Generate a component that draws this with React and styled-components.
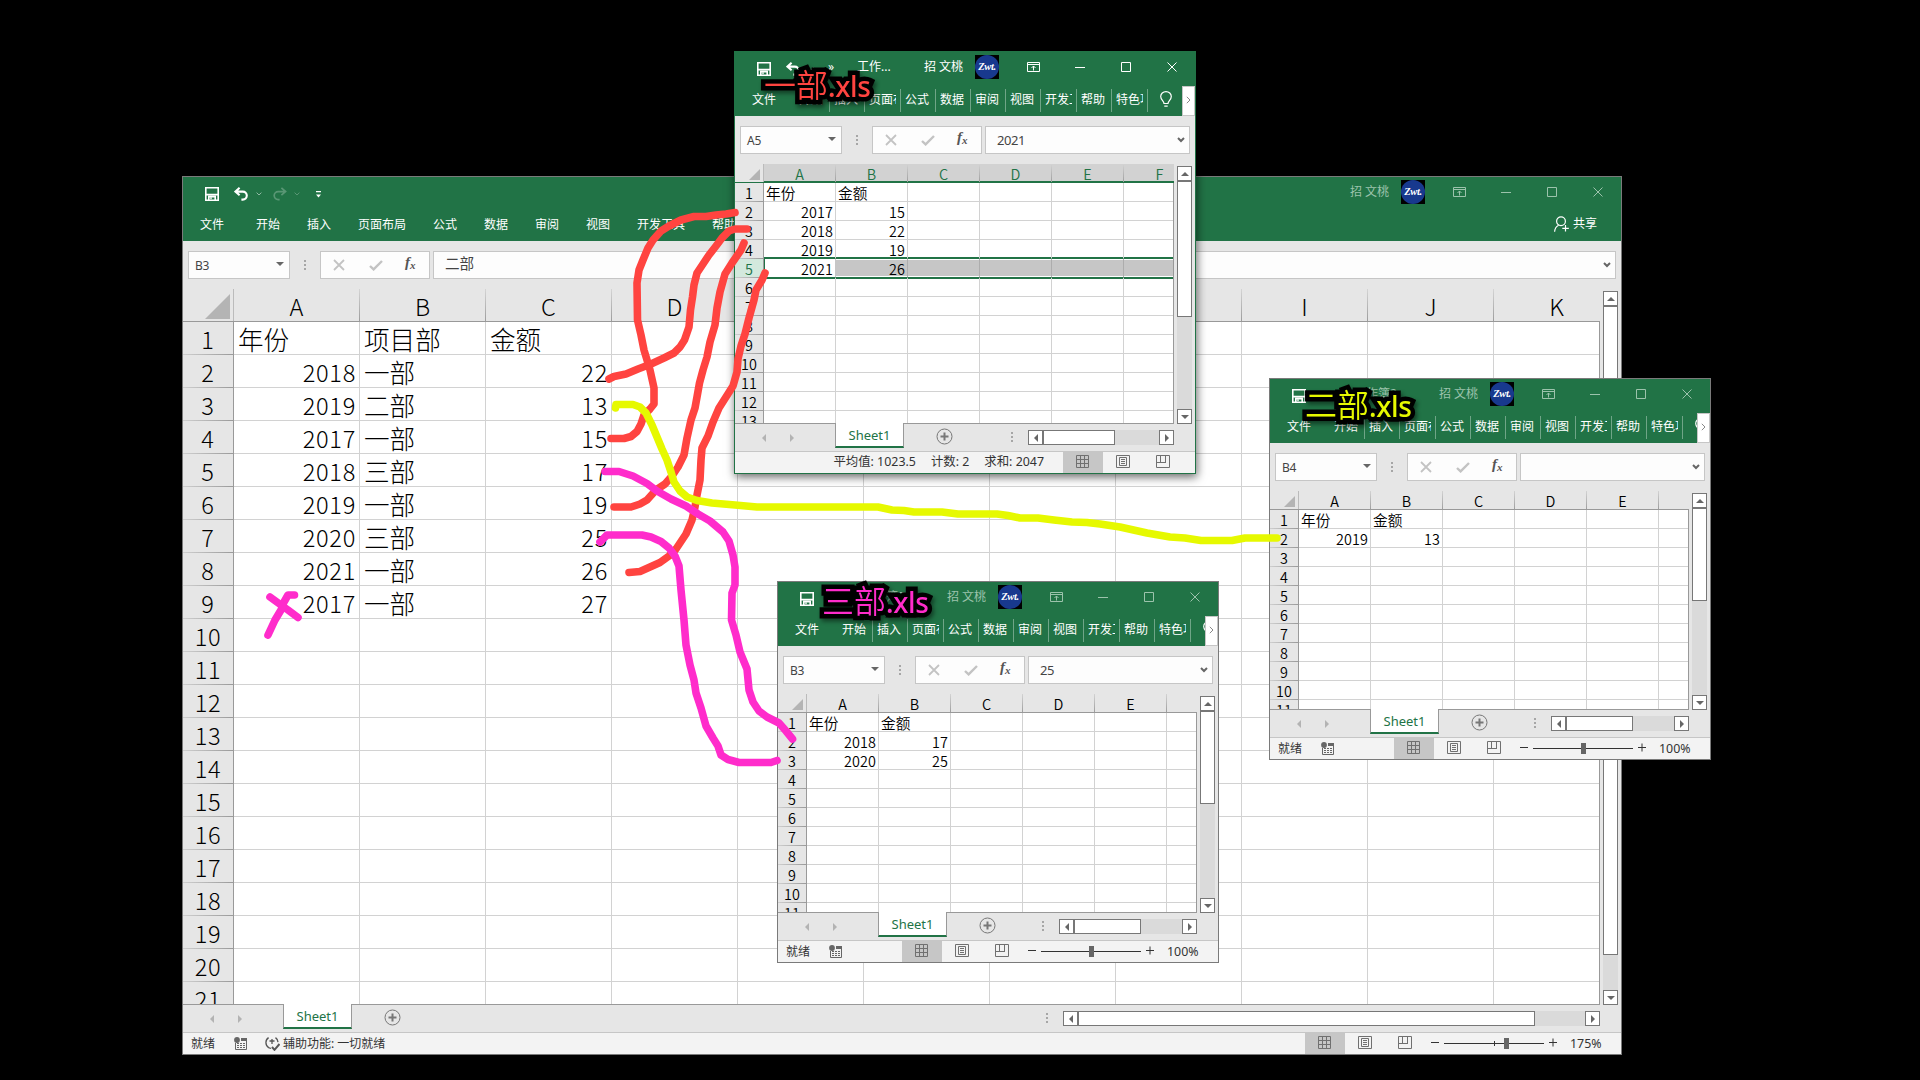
import React from "react";
import styled, { createGlobalStyle, css } from "styled-components";

const GREEN = "#217346";
const UI_FONT = '"Noto Sans", "Noto Sans CJK SC", sans-serif';
const CELL_FONT = '"Noto Sans CJK SC", "Noto Sans", sans-serif';

const GlobalStyle = createGlobalStyle`
  * { box-sizing: border-box; }
  html, body { margin: 0; padding: 0; background: #000; }
  body { width: 1920px; height: 1080px; overflow: hidden; font-family: ${UI_FONT}; font-size: 12px; }
`;

const Desktop = styled.main`
  position: relative;
  width: 1920px;
  height: 1080px;
  background: #000;
  overflow: hidden;
`;

const Frame = styled.section`
  position: absolute;
  left: ${(p) => p.$x}px;
  top: ${(p) => p.$y}px;
  width: ${(p) => p.$w}px;
  height: ${(p) => p.$h}px;
  display: flex;
  flex-direction: column;
  background: #e6e6e6;
  border: 1px solid ${(p) => (p.$active ? GREEN : "#7a7a7a")};
  box-shadow: ${(p) => (p.$active ? "1px 3px 9px rgba(0,0,0,.6)" : "none")};
`;

/* ---------- title bar ---------- */
const TitleBar = styled.header`
  flex: none;
  height: 30px;
  background: ${GREEN};
  color: ${(p) => (p.$active ? "#fff" : "#9cc3ac")};
  display: flex;
  align-items: center;
  justify-content: space-between;
`;
const QuickAccess = styled.div`
  display: flex;
  align-items: center;
  padding-left: 22px;
  height: 30px;
  white-space: nowrap;
  svg { flex: none; display: block; margin-top: 4px; }
`;
const Space = styled.span`
  flex: none;
  width: ${(p) => p.$w}px;
`;
const Caption = styled.span`
  font-size: 12px;
  line-height: 18px;
`;
const WindowControls = styled.div`
  display: flex;
  align-items: center;
  width: 271px;
  flex: none;
  svg { flex: none; display: block; }
`;
const UserName = styled.span`
  width: 51px;
  font-size: 12px;
  line-height: 18px;
  white-space: nowrap;
`;
const Avatar = styled.span`
  width: 24px;
  height: 24px;
  margin-right: 28px;
  background: #000;
  flex: none;
`;
const AvatarDisc = styled.span`
  display: flex;
  align-items: center;
  justify-content: center;
  width: 24px;
  height: 24px;
  border-radius: 50%;
  background: #18398e;
  color: #fff;
  font: italic bold 10.5px/22px "Liberation Serif", serif;
  letter-spacing: -0.4px;
`;

/* ---------- ribbon ---------- */
const Ribbon = styled.nav`
  flex: none;
  height: 34px;
  background: ${GREEN};
  color: #fff;
  display: flex;
  font-size: 12px;
  line-height: 36px;
  white-space: nowrap;
  overflow: hidden;
`;
const WideTab = styled.span`
  flex: none;
  width: ${(p) => p.$w}px;
`;
const WideTabs = styled.div`
  display: flex;
  flex: 1;
  padding-left: 17px;
`;
const Share = styled.div`
  display: flex;
  align-items: center;
  gap: 4px;
  padding-right: 24px;
  flex: none;
  line-height: 34px;
`;
const FileTab = styled.span`
  flex: none;
  width: 60px;
  padding-left: 17px;
`;
const NarrowTab = styled.span`
  flex: none;
  display: flex;
  align-items: center;
  width: ${(p) => p.$w}px;
  height: 23px;
  margin-top: 7px;
  padding-left: 4px;
  border-right: 1px solid #6fa587;
  line-height: 18px;
`;
const Clip = styled.span`
  width: 27px;
  height: 20px;
  overflow: hidden;
`;
const TellMe = styled.span`
  flex: 1;
  min-width: 0;
  overflow: hidden;
  padding: 9px 0 0 12px;
  svg { display: block; }
`;
const ScrollTabs = styled.span`
  flex: none;
  width: 13px;
  height: 30px;
  margin-top: 4px;
  padding-bottom: 2px;
  background: #fff;
  border: 1px solid #c6c6c6;
  display: flex;
  align-items: center;
  justify-content: center;
`;

/* ---------- formula bar ---------- */
const FormulaBar = styled.div`
  flex: none;
  height: 48px;
  padding: 10px 5px 0;
  display: flex;
  color: #444;
`;
const Box = styled.div`
  height: 28px;
  background: #fdfdfd;
  border: 1px solid #c6c6c6;
  display: flex;
  align-items: center;
`;
const NameBox = styled(Box)`
  width: 102px;
  padding: 0 5px 0 6px;
  justify-content: space-between;
  font-size: 12px;
  letter-spacing: -0.2px;
`;
const NameArrow = styled.span`
  padding-bottom: 3px;
  display: flex;
`;
const Dots = styled.span`
  width: 2px;
  height: 10px;
  flex: none;
  margin: ${(p) => p.$m};
  background: repeating-linear-gradient(#a6a6a6 0 2px, transparent 2px 4px);
`;
const FxBox = styled(Box)`
  width: 110px;
  padding-left: 10px;
  margin-right: 3px;
`;
const FxIcon = styled.span`
  font: italic bold 15px/20px "Liberation Serif", serif;
  color: #555;
  width: 16px;
  margin-left: 22px;
  display: flex;
  sub { font-size: 11px; line-height: 26px; vertical-align: baseline; }
`;
const ValueBox = styled(Box)`
  flex: 1;
  padding: 0 4px 0 11px;
  justify-content: space-between;
  font-family: ${(p) => (p.$cjk ? CELL_FONT : UI_FONT)};
  font-size: ${(p) => (p.$cjk ? 14.6 : 13)}px;
  letter-spacing: ${(p) => (p.$cjk ? 0 : -0.45)}px;
`;
const Value = styled.span`
  padding-bottom: ${(p) => (p.$raised ? 5 : 1)}px;
`;

/* ---------- sheet ---------- */
const Body = styled.div`
  flex: 1;
  min-height: 0;
  display: flex;
  overflow: hidden;
`;
const Sheet = styled.div`
  flex: 1;
  min-width: 0;
  display: flex;
  flex-direction: column;
  overflow: hidden;
`;
const HeadRow = styled.div`
  flex: none;
  height: ${(p) => p.$s.rowH}px;
  display: flex;
  overflow: hidden;
  border-bottom: 1px solid ${(p) => (p.$selected ? GREEN : "#999")};
`;
const Corner = styled.div`
  flex: none;
  width: ${(p) => p.$s.headW}px;
  display: flex;
  justify-content: flex-end;
  align-items: flex-end;
  padding: 0 3px 2px 0;
  border-right: 1px solid #bbb;
`;
const Triangle = styled.span`
  width: ${(p) => p.$size}px;
  height: ${(p) => p.$size}px;
  background: #b4b4b4;
  clip-path: polygon(100% 0, 100% 100%, 0 100%);
`;
const ColHead = styled.div`
  flex: none;
  width: ${(p) => p.$s.colW}px;
  font-family: ${CELL_FONT};
  font-weight: ${(p) => p.$s.weight};
  font-size: ${(p) => p.$s.digit}px;
  line-height: ${(p) => p.$s.headLine}px;
  text-align: center;
  color: #000;
  border-right: 1px solid;
  border-image: linear-gradient(#d6d6d6, #9b9b9b) 1;
  ${(p) =>
    p.$selected &&
    css`
      background: #d2d2d2;
      color: ${GREEN};
      box-shadow: inset 0 -1px 0 ${GREEN};
    `}
`;
const Rows = styled.div`
  flex: 1;
  min-height: 0;
  overflow: hidden;
  background: #fff;
  border-right: 1px solid #999;
  border-bottom: 1px solid #999;
`;
const Row = styled.div`
  display: flex;
  height: ${(p) => p.$s.rowH}px;
`;
const RowHead = styled.div`
  flex: none;
  width: ${(p) => p.$s.headW}px;
  background: ${(p) => (p.$selected ? "#d3e9dd" : "#e6e6e6")};
  color: ${(p) => (p.$selected ? GREEN : "#000")};
  border-right: 1px solid #999;
  border-bottom: 1px solid;
  border-image: linear-gradient(90deg, #d0d0d0, #999) 1;
  font-family: ${CELL_FONT};
  font-weight: ${(p) => p.$s.weight};
  font-size: ${(p) => p.$s.digit}px;
  letter-spacing: ${(p) => p.$s.spacing}px;
  line-height: ${(p) => p.$s.line}px;
  text-align: center;
`;
const Cell = styled.div`
  flex: none;
  width: ${(p) => p.$s.colW}px;
  padding: 0 ${(p) => p.$s.padR}px 0 ${(p) => p.$s.padL}px;
  border-right: 1px solid #d2d2d2;
  border-bottom: 1px solid #d2d2d2;
  font-family: ${CELL_FONT};
  font-weight: ${(p) => p.$s.weight};
  font-size: ${(p) => (p.$num ? p.$s.digit : p.$s.text)}px;
  letter-spacing: ${(p) => (p.$num ? p.$s.spacing : 0)}px;
  line-height: ${(p) => p.$s.line}px;
  text-align: ${(p) => (p.$num ? "right" : "left")};
  white-space: nowrap;
  color: #000;
  ${(p) =>
    p.$selected &&
    css`
      background: #c6c6c6;
      border-right-color: #adadad;
      border-bottom: 1px solid ${GREEN};
      box-shadow: inset 0 -1px 0 #fff, inset 0 1px 0 #fff;
    `}
  ${(p) =>
    p.$anchor &&
    css`
      background: #fff;
      border-right-color: #c6c6c6;
      border-bottom: 1px solid ${GREEN};
      box-shadow: inset 1px 0 0 ${GREEN};
    `}
  ${(p) => p.$above && `border-bottom-color: ${GREEN}; box-shadow: inset 0 -1px 0 ${GREEN};`}
  ${(p) => p.$below && `box-shadow: inset 0 1px 0 ${GREEN};`}
`;

/* ---------- scrollbars ---------- */
const VScroll = styled.div`
  flex: none;
  width: 15px;
  margin: 2px 3px 0;
  background: #dadada;
  display: flex;
  flex-direction: column;
`;
const ScrollButton = styled.span`
  flex: none;
  width: 15px;
  height: 15px;
  background: #fff;
  border: 1px solid #777;
  display: flex;
  align-items: center;
  justify-content: center;
`;
const Thumb = styled.span`
  flex: none;
  background: #fff;
  border: 1px solid #777;
  width: ${(p) => p.$w || 15}px;
  height: ${(p) => p.$h || 15}px;
`;
const Fill = styled.span`
  flex: 1;
`;
const Arrow = styled.span`
  width: 0;
  height: 0;
  border: 4px solid transparent;
  ${(p) => p.$dir === "up" && "border-bottom-color:#666;border-top-width:0;"}
  ${(p) => p.$dir === "down" && "border-top-color:#666;border-bottom-width:0;"}
  ${(p) => p.$dir === "left" && "border-right-color:#666;border-left-width:0;"}
  ${(p) => p.$dir === "right" && "border-left-color:#666;border-right-width:0;"}
  ${(p) => p.$muted && "opacity:.4;"}
`;

/* ---------- sheet tabs ---------- */
const TabStrip = styled.div`
  flex: none;
  height: 27px;
  display: flex;
  padding-right: 21px;
`;
const NavArrows = styled.div`
  width: 100px;
  padding-left: 27px;
  display: flex;
  gap: 24px;
  align-items: center;
`;
const SheetTab = styled.div`
  width: 69px;
  height: 25px;
  margin-top: -1px;
  background: #fff;
  border: 1px solid #999;
  border-top: 0;
  border-bottom: 2px solid ${GREEN};
  color: ${GREEN};
  font-size: 13px;
  line-height: 25px;
  text-align: center;
  position: relative;
`;
const AddSheet = styled.span`
  width: 17px;
  height: 17px;
  margin: 4px 0 0 32px;
  svg { display: block; }
`;
const HScroll = styled.div`
  width: ${(p) => p.$w}px;
  height: 15px;
  margin-top: 6px;
  background: #dadada;
  display: flex;
`;

/* ---------- status bar ---------- */
const StatusBar = styled.footer`
  flex: none;
  height: 22px;
  background: #f3f3f3;
  border-top: 1px solid #c6c6c6;
  color: #333;
  display: flex;
  font-size: 12px;
  line-height: 20px;
  white-space: nowrap;
  svg { display: block; flex: none; }
`;
const StatusLeft = styled.div`
  flex: 1;
  display: flex;
  align-items: center;
  padding-left: 8px;
`;
const Stats = styled.div`
  flex: 1;
  display: flex;
  justify-content: flex-end;
  gap: 15px;
  padding-right: 19px;
  font-size: 12.4px;
`;
const ViewButton = styled.span`
  width: 40px;
  display: flex;
  align-items: center;
  justify-content: center;
  padding: 0 1px 2px 0;
  background: ${(p) => (p.$on ? "#c6c6c6" : "transparent")};
`;
const Zoom = styled.div`
  display: flex;
  width: 196px;
  align-items: center;
`;
const ZoomValue = styled.span`
  margin-left: 13px;
  font-size: 12.4px;
`;

/* ---------- annotations ---------- */
const Ink = styled.svg`
  position: absolute;
  left: 0;
  top: 0;
  fill: none;
  stroke-width: 7.6;
  stroke-linecap: round;
  stroke-linejoin: round;
`;
const Tag = styled.div`
  position: absolute;
  left: ${(p) => p.$x}px;
  top: ${(p) => p.$y}px;
  display: flex;
  align-items: baseline;
  height: 40px;
  line-height: 40px;
  white-space: nowrap;
  color: ${(p) => p.$color};
  -webkit-text-stroke: 9px #000;
  paint-order: stroke fill;
  filter: drop-shadow(2px 3px 2px rgba(0, 0, 0, 0.45));
`;
const TagName = styled.span`
  font: 350 32px/40px ${CELL_FONT};
`;
const TagExt = styled.span`
  font: 500 28px/40px "Noto Sans", sans-serif;
  letter-spacing: -0.4px;
`;

/* ---------- icons ---------- */
const SaveIcon = () => (
  <svg width="14" height="14" viewBox="0 0 14 14" fill="none" stroke="#fff" strokeWidth="1.6">
    <path d="M.8.8h12.4v12.4H.8z" />
    <path d="M1 7.600h12M3.800 13V9.600h6.400V13" />
    <path d="M6 12.200v-2" strokeWidth="1.4" />
  </svg>
);
const UndoIcon = ({ flip }) => (
  <svg width="14" height="14" viewBox="0 0 14 14" fill="none" stroke="#fff" strokeWidth={flip ? 1.7 : 2.1}
    opacity={flip ? 0.25 : 1} transform={flip ? "scale(-1 1)" : undefined}>
    <path d="M5.600.8 1.400 4.600l4.200 3.600M1.600 4.600h7.200a4 4 0 0 1 0 8H7.400" />
  </svg>
);
const Caret = ({ faint }) => (
  <svg width="6" height="4" viewBox="0 0 6 4" fill="none" stroke="#fff" opacity={faint ? 0.25 : 0.5}>
    <path d="M.6.6 3 3 5.400.6" />
  </svg>
);
const Customize = () => (
  <svg width="5" height="7" viewBox="0 0 5 7" fill="#fff"><path d="M0 0h5v1.200H0zM0 3.600h5L2.500 6.400z" /></svg>
);
const Controls = () => (
  <svg width="151" height="14" viewBox="0 0 151 14" fill="none" stroke="currentColor">
    <path d="M.5 2.5h12v9H.5zM.5 4.5h12M6.5 10.5v-4.500M4.500 8l2-2 2 2M48 7.500h10M94.500 2.500h9v9h-9zM140.500 2.500l9 9M149.500 2.500l-9 9" />
  </svg>
);
const Bulb = () => (
  <svg width="12" height="17" viewBox="0 0 12 17" fill="none" stroke="#fff" strokeWidth="1.2">
    <path d="M4 12.500c0-2.400-3.300-3.500-3.300-7a5.300 4.900 0 0 1 10.600 0c0 3.500-3.300 4.600-3.300 7zM4.300 15.200h3.400" />
  </svg>
);
const ShareIcon = () => (
  <svg width="15" height="16" viewBox="0 0 15 16" fill="none" stroke="#fff" strokeWidth="1.2">
    <circle cx="7" cy="5.200" r="4.400" />
    <path d="M.6 15.800c.2-3.300 1.800-5.600 4-6.600M11.500 9v6.500M8.300 12.300h6.500" />
  </svg>
);
const Cross = () => (
  <svg width="12" height="12" viewBox="0 0 12 12" fill="none" stroke="#c3c3c3" strokeWidth="1.800"><path d="M1 1l10 10M11 1 1 11" /></svg>
);
const Check = () => (
  <svg width="14" height="11" viewBox="0 0 14 11" fill="none" stroke="#c3c3c3" strokeWidth="2.400"><path d="M1 6l3.600 3.400L13 1" /></svg>
);
const ExpandIcon = () => (
  <svg width="8" height="6" viewBox="0 0 8 6" fill="none" stroke="#666" strokeWidth="2"><path d="M1 1l3 3 3-3" /></svg>
);
const PlusCircle = () => (
  <svg width="17" height="17" viewBox="0 0 17 17" fill="none" stroke="#777">
    <circle cx="8.500" cy="8.500" r="7.500" />
    <path d="M8.500 4.500v8M4.500 8.500h8" strokeWidth="2" />
  </svg>
);
const MacroIcon = () => (
  <svg width="13" height="13" viewBox="0 0 13 13" fill="none" stroke="#666">
    <path d="M1.500 6v6.500h11v-11H7" />
    <path d="M7 1h6v3H7z" fill="#666" stroke="none" />
    <circle cx="3" cy="3" r="2.900" fill="#666" stroke="none" />
    <path d="M3 6.500h9M3 8.500h9M3 10.500h9" strokeDasharray="2 1" />
  </svg>
);
const AccessIcon = () => (
  <svg width="15" height="15" viewBox="0 0 15 15" fill="none" stroke="#555" strokeWidth="1.300">
    <path d="M3.600 1.600a6 6 0 0 0 0 10M10.500 1.600a6 6 0 0 1 2.500 4.500M4.500 5h5M7 3v5M3.600 11.600 6 12.500" />
    <path d="m7 11 2.500 2.800L14.500 8" strokeWidth="2" />
  </svg>
);
const GridView = () => (
  <svg width="13" height="13" viewBox="0 0 13 13" fill="none" stroke="#707070"><path d="M.5.5h12v12H.5zM4.500 0v13M8.500 0v13M0 4.500h13M0 8.500h13" /></svg>
);
const PageView = () => (
  <svg width="14" height="13" viewBox="0 0 14 13" fill="none" stroke="#707070"><path d="M.5.5h13v12H.5zM3.500 2.500h7v8h-7zM5 4.500h4M5 6.500h4M5 8.500h4" /></svg>
);
const BreakView = () => (
  <svg width="14" height="13" viewBox="0 0 14 13" fill="none" stroke="#707070"><path d="M.5.5h13v12H.5zM4.500 1v6M9.500 1v6M1 7.500h9" /></svg>
);
const ZoomTrack = ({ value }) => (
  <svg width="132" height="13" viewBox="0 0 132 13">
    <path d="M6 5.500h8M19 6.500h100M124 5.500h8M128 1.500v8" stroke="#333" fill="none" />
    <path d="M69.500 4v5" stroke="#333" />
    <rect x={value} y="1" width="5" height="11" fill="#666" />
  </svg>
);

/* ---------- data ---------- */
const LARGE = { rowH: 33, colW: 126, headW: 51, digit: 23.6, text: 25.6, spacing: 0.7, line: 34, headLine: 34, padL: 4, padR: 3, weight: 300 };
LARGE.tri = 25;
const SMALL = { rowH: 19, colW: 72, headW: 29, digit: 14.4, text: 14.7, spacing: 0.1, line: 19.5, headLine: 20, padL: 2, padR: 2, weight: 350, tri: 11 };

const WIDE_TABS = [["文件", 56], ["开始", 51], ["插入", 51], ["页面布局", 75], ["公式", 51], ["数据", 51], ["审阅", 51], ["视图", 51], ["开发工具", 75], ["帮助", 40]];
const NARROW_TABS = [["开始", 35], ["插入", 35], ["页面布局", 36], ["公式", 35], ["数据", 35], ["审阅", 35], ["视图", 35], ["开发工具", 36], ["帮助", 35], ["特色功能", 36]];

const WINDOWS = [
  {
    id: "main", x: 182, y: 176, w: 1440, h: 879, wide: true, size: LARGE, cell: "B3", value: "二部", rows: 21,
    cols: "ABCDEFGHIJK", vThumb: 649, hWidth: 537, hThumb: 457, zoom: "175%", knob: 79,
    data: [["年份", "项目部", "金额"], [2018, "一部", 22], [2019, "二部", 13], [2017, "一部", 15], [2018, "三部", 17], [2019, "一部", 19], [2020, "三部", 25], [2021, "一部", 26], [2017, "一部", 27]],
  },
  {
    id: "d3", x: 777, y: 581, w: 442, h: 382, size: SMALL, cell: "B3", value: "25", rows: 11, cols: "ABCDEF", vThumb: 93,
    hWidth: 138, hThumb: 67, zoom: "100%", knob: 67, title: "工作簿3",
    data: [["年份", "金额"], [2018, 17], [2020, 25]],
  },
  {
    id: "d2", x: 1269, y: 378, w: 442, h: 382, size: SMALL, cell: "B4", value: "", rows: 11, cols: "ABCDEF", vThumb: 93,
    hWidth: 138, hThumb: 67, zoom: "100%", knob: 67, title: "工作簿2",
    data: [["年份", "金额"], [2019, 13]],
  },
  {
    id: "d1", x: 734, y: 51, w: 462, h: 423, active: true, size: SMALL, cell: "A5", value: "2021", rows: 13, cols: "ABCDEF",
    vThumb: 136, hWidth: 146, hThumb: 72, selected: 5, stats: ["平均值: 1023.5", "计数: 2", "求和: 2047"],
    data: [["年份", "金额"], [2017, 15], [2018, 22], [2019, 19], [2021, 26]],
  },
];

function Title({ win }) {
  return (
    <TitleBar $active={win.active}>
      <QuickAccess>
        <SaveIcon />
        {win.title ? (
          <>
            <Space $w={48} />
            <Caption>{win.title}</Caption>
          </>
        ) : (
          <>
            <Space $w={15} />
            <UndoIcon />
            <Space $w={8} />
            <Caret />
            {win.wide ? (
              <>
                <Space $w={11} />
                <UndoIcon flip />
                <Space $w={7} />
                <Caret faint />
                <Space $w={16} />
                <Customize />
              </>
            ) : (
              <>
                <Space $w={14} />
                <Caption>»</Caption>
                <Space $w={23} />
                <Caption>工作...</Caption>
              </>
            )}
          </>
        )}
      </QuickAccess>
      <WindowControls>
        <UserName>招 文桃</UserName>
        <Avatar><AvatarDisc>Zwt.</AvatarDisc></Avatar>
        <Controls />
      </WindowControls>
    </TitleBar>
  );
}

function Tabs({ wide }) {
  if (wide) {
    return (
      <Ribbon>
        <WideTabs>
          {WIDE_TABS.map(([t, w]) => <WideTab key={t} $w={w}>{t}</WideTab>)}
        </WideTabs>
        <Share><ShareIcon />共享</Share>
      </Ribbon>
    );
  }
  return (
    <Ribbon>
      <FileTab>文件</FileTab>
      {NARROW_TABS.map(([t, w]) => <NarrowTab key={t} $w={w}><Clip>{t}</Clip></NarrowTab>)}
      <TellMe><Bulb /></TellMe>
      <ScrollTabs>
        <svg width="5" height="8" viewBox="0 0 5 8" fill="none" stroke="#888"><path d="M.8.8 4 4 .8 7.200" /></svg>
      </ScrollTabs>
    </Ribbon>
  );
}

function Grid({ win }) {
  const s = win.size;
  const cols = win.cols.split("");
  return (
    <Sheet>
      <HeadRow $s={s} $selected={!!win.selected}>
        <Corner $s={s}><Triangle $size={s.tri} /></Corner>
        {cols.map((c) => (
          <ColHead key={c} $s={s} $selected={!!win.selected}>
            {c === "F" && !win.wide && !win.active ? "" : c}
          </ColHead>
        ))}
      </HeadRow>
      <Rows>
        {Array.from({ length: win.rows }, (_, i) => i + 1).map((n) => {
          const on = n === win.selected;
          return (
            <Row key={n} $s={s}>
              <RowHead $s={s} $selected={on}>{n}</RowHead>
              {cols.map((c, j) => {
                const v = (win.data[n - 1] || [])[j];
                return (
                  <Cell key={c} $s={s} $num={typeof v === "number"} $selected={on && j > 0} $anchor={on && j === 0}
                    $above={n + 1 === win.selected} $below={n - 1 === win.selected}>
                    {v}
                  </Cell>
                );
              })}
            </Row>
          );
        })}
      </Rows>
    </Sheet>
  );
}

function Workbook({ win }) {
  return (
    <Frame $x={win.x} $y={win.y} $w={win.w} $h={win.h} $active={win.active}>
      <Title win={win} />
      <Tabs wide={win.wide} />
      <FormulaBar>
        <NameBox>{win.cell}<NameArrow><Arrow $dir="down" /></NameArrow></NameBox>
        <Dots $m="9px 14px 0" />
        <FxBox>
          <Space $w={2} /><Cross /><Space $w={24} /><Check />
          <FxIcon>f<sub>x</sub></FxIcon>
        </FxBox>
        <ValueBox $cjk={win.wide}><Value $raised={win.wide}>{win.value}</Value><ExpandIcon /></ValueBox>
      </FormulaBar>
      <Body>
        <Grid win={win} />
        <VScroll>
          <ScrollButton><Arrow $dir="up" /></ScrollButton>
          <Thumb $h={win.vThumb} />
          <Fill />
          <ScrollButton><Arrow $dir="down" /></ScrollButton>
        </VScroll>
      </Body>
      <TabStrip>
        <NavArrows><Arrow $dir="left" $muted /><Arrow $dir="right" $muted /></NavArrows>
        <SheetTab>Sheet1</SheetTab>
        <AddSheet><PlusCircle /></AddSheet>
        <Fill />
        <Dots $m="8px 15px 0 0" />
        <HScroll $w={win.hWidth}>
          <ScrollButton><Arrow $dir="left" /></ScrollButton>
          <Thumb $w={win.hThumb} />
          <Fill />
          <ScrollButton><Arrow $dir="right" /></ScrollButton>
        </HScroll>
      </TabStrip>
      <StatusBar>
        {win.stats ? (
          <Stats>{win.stats.map((t) => <span key={t}>{t}</span>)}</Stats>
        ) : (
          <StatusLeft>
            就绪<Space $w={19} /><MacroIcon />
            {win.wide && <><Space $w={18} /><AccessIcon /><Space $w={3} />辅助功能: 一切就绪</>}
          </StatusLeft>
        )}
        <ViewButton $on><GridView /></ViewButton>
        <ViewButton><PageView /></ViewButton>
        <ViewButton><BreakView /></ViewButton>
        {win.stats ? <Space $w={12} /> : (
          <Zoom><ZoomTrack value={win.knob} /><ZoomValue>{win.zoom}</ZoomValue></Zoom>
        )}
      </StatusBar>
    </Frame>
  );
}

const STROKES = {
  "#ff4440": [
    "611,438.500 624,438.500 631,436.500 637,431.500 641,424 644,415 650,409 654,404 654,388 650,370 644,350 641,335 637.500,320 637,283 639,270 643,260 648,248 653,240 661,231 669,226 681,220 694,216.500 706,216.500 716,215 726,214 735,212.500",
    "609,379 614,376.500 626,374 638,369 651,364 664,358 674,353 680,347 684.500,340 689,327 690.500,310 692.500,297 694,285 697,273 703,264 709,255 716,246 722,238 729,231 735,229 747,229",
    "614,507 631,507 640,504 647,500 656,490 665,484 672,476 678,467 684,455 687,438 691,420 695,408 697,397 699.500,383 703,370 707,357 710,342 715,325 717,308 720,292 725,274 732,263 741,250 744,243",
    "629,572.500 640,571.500 650,567 660,562.500 669,556 676,549 686,534 692,520 695,507 697,495 700,480 701,460 702,448 708,436 713,422 719,408 726,397 733,386 737,372 738,359 741,346 745,334 749,318 754,300 756,290 762,280 765,273",
  ],
  "#e6f900": [
    "615.500,408 616,404.500 633,404.500 640,407 646,413 652,425 657,437 662,449 667,460 671,472 674,482 680,491 687,497 697,500.500 712,503 735,505 757,507 878,507 892,510 904,510.500 914,512 942,512 958,514 997,514 1008,515.500 1020,518 1038,518 1054,520 1072,522 1087,522.500 1100,524 1120,527 1147,533 1170,537 1185,538 1201,540.500 1232,540.500 1245,538 1277,538",
  ],
  "#ff2ccb": [
    "605,471.500 619,471.500 633,476 647,483.500 657,491 671,499 686,506 698,514 710,521 723,532 729,541 733,555 735,567 735,585 732,593 731.500,620 736,635 740,652 747,669 749,690 753,702 759,711 767,717 779,723 786,731 792.500,739",
    "600,542 607,535 642,535 651,537 661,541.500 669,548 675,556 679,566 681,590 684,620 686,645 690,665 694,680 696,693 701,708 706,726 713,738 718,746 721,755 728,759.500 739,762.500 771,762.500 777,760.500",
    "270,597 281,605 288,610 298,617.500",
    "294.500,595 288,595 284,602 281,610 275,620 268,635",
  ],
};

const TAGS = [
  { x: 764, y: 63, color: "#ff4440", name: "一部" },
  { x: 1305, y: 383, color: "#e6f900", name: "二部" },
  { x: 822, y: 579, color: "#ff2ccb", name: "三部" },
];

export default function App() {
  return (
    <Desktop>
      <GlobalStyle />
      {WINDOWS.map((w) => <Workbook key={w.id} win={w} />)}
      <Ink width="1920" height="1080" viewBox="0 0 1920 1080">
        {Object.entries(STROKES).map(([color, lines]) =>
          lines.map((pts) => <polyline key={pts} points={pts} stroke={color} />)
        )}
      </Ink>
      {TAGS.map((t) => (
        <Tag key={t.name} $x={t.x} $y={t.y} $color={t.color}>
          <TagName>{t.name}</TagName>
          <TagExt>.xls</TagExt>
        </Tag>
      ))}
    </Desktop>
  );
}
